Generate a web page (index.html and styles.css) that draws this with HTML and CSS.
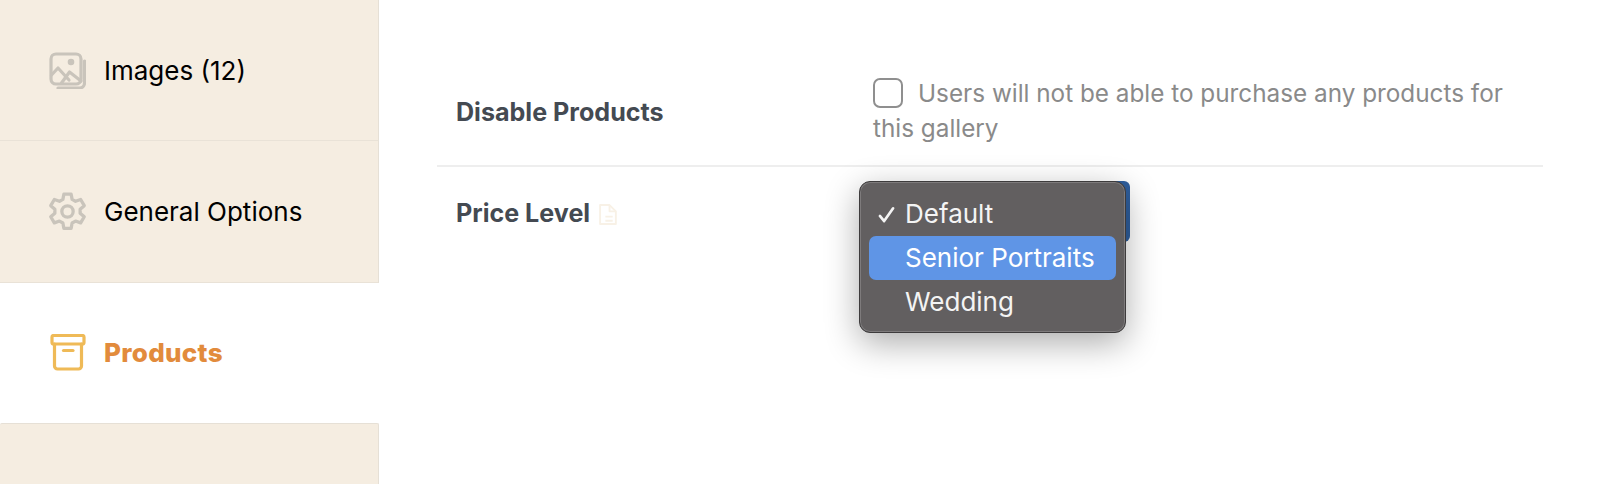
FILE: index.html
```html
<!DOCTYPE html>
<html lang="en">
<head>
<meta charset="utf-8">
<title>Products</title>
<link rel="stylesheet" href="styles.css">
</head>
<body>
<div class="page">
  <nav class="sidebar">
    <div class="tab tab-images">
      <svg class="icon icon-muted" viewBox="0 0 37 37" fill="none" stroke="currentColor" stroke-width="3.200" stroke-linecap="round" stroke-linejoin="round">
        <rect x="2" y="2" width="30" height="30" rx="5"/>
        <path d="M35.500 9v22a5 5 0 0 1-5 5H9"/>
        <path d="M2.500 23l6.500-7 11 12"/>
        <path d="M12.500 31l8-11 11.500 9"/>
        <circle cx="22" cy="10" r="1.700" fill="currentColor"/>
      </svg>
      <span>Images (12)</span>
    </div>
    <div class="tab tab-general">
      <svg class="icon icon-muted icon-gear" viewBox="1 1 36 36" fill="none" stroke="currentColor" stroke-width="3.200" stroke-linecap="round" stroke-linejoin="round">
        <path d="M15.500 2h7l1 5.200 3.300 1.900 5-1.800 3.500 6-4 3.500v3.800l4 3.500-3.500 6-5-1.800-3.300 1.900-1 5.300h-7l-1-5.300-3.300-1.900-5 1.800-3.500-6 4-3.500v-3.800l-4-3.500 3.500-6 5 1.800 3.300-1.900z"/>
        <circle cx="19" cy="19" r="5.500"/>
      </svg>
      <span>General Options</span>
    </div>
    <div class="tab tab-active">
      <svg class="icon icon-active" viewBox="0 0 37 37" fill="none" stroke="currentColor" stroke-width="3.200" stroke-linecap="round" stroke-linejoin="round">
        <rect x="3" y="1.500" width="32" height="8.500" rx="1.500"/>
        <path d="M5.500 10v22a3 3 0 0 0 3 3h21a3 3 0 0 0 3-3V10"/>
        <path d="M14.500 16.500h9.500"/>
      </svg>
      <span>Products</span>
    </div>
    <div class="tab tab-last"></div>
  </nav>
  <main class="content">
    <div class="row row-first">
      <div class="label label-first">Disable Products</div>
      <div class="value">
        <span class="checkbox"></span>Users will not be able to purchase any products for this gallery
      </div>
    </div>
    <div class="row row-second">
      <div class="label">Price Level
        <svg class="note" viewBox="0 0 20 20" fill="none" stroke="currentColor" stroke-width="1.800" stroke-linejoin="round">
          <path d="M2 1h9l6 6v12H2z"/>
          <path d="M11 1v6h6"/>
          <path d="M7 12h7M7 16h7"/>
        </svg>
      </div>
      <div class="value value-select">
        <div class="select-stub"></div>
        <div class="menu">
          <div class="option">
            <svg class="check" viewBox="0 0 18 18" fill="none" stroke="currentColor" stroke-width="2.800" stroke-linecap="round" stroke-linejoin="round"><path d="M2 10.500l4.500 5.500L16 2.500"/></svg>
            Default
          </div>
          <div class="option option-hover">Senior Portraits</div>
          <div class="option">Wedding</div>
        </div>
      </div>
    </div>
  </main>
</div>
</body>
</html>
```
FILE: styles.css
```css
* { box-sizing: border-box; }
html, body { margin: 0; height: 484px; overflow: hidden; background: #fff; }
body { font-family: Inter, "Liberation Sans", sans-serif; color: #000; }
.page { display: flex; height: 484px; }
.sidebar { width: 379px; flex: none; display: flex; flex-direction: column; }
.tab {
  flex: none;
  display: flex;
  align-items: center;
  gap: 18px;
  padding-left: 49px;
  background: #f5ede1;
  border-right: 1px solid #e6e0d6;
  border-bottom: 1px solid #e9e2d7;
  font-size: 26px;
}
.tab-images { height: 141px; }
.tab-general { height: 142px; }
.tab-active {
  height: 140px;
  padding-bottom: 2px;
  background: #fff;
  border: 0;
  color: #e28b3c;
  font-weight: 800;
  letter-spacing: .3px;
}
.tab-last {
  flex: 1;
  border-top: 1px solid #e6e0d6;
  border-radius: 2px 2px 0 0;
  border-bottom: 0;
}
.icon { width: 37px; height: 37px; flex: none; }
.icon-gear { overflow: visible; }
.icon-muted { color: #c9c4bb; }
.icon-active { color: #efba57; }
.content { width: 1106px; margin-left: 58px; flex: none; display: flex; flex-direction: column; }
.row { display: flex; align-items: center; padding-left: 19px; padding-right: 20px; }
.row-first { padding-top: 76px; padding-bottom: 19px; border-bottom: 2px solid #eeeeee; }
.row-second { padding-top: 28px; }
.label {
  width: 417px;
  flex: none;
  font-size: 25.100px;
  font-weight: 700;
  color: #444a52;
  line-height: 36px;
}
.label-first { margin-top: 2px; }
.value { flex: 1; font-size: 24.300px; line-height: 35px; color: #8a8a8a; }
.checkbox {
  display: inline-block;
  width: 30px;
  height: 30px;
  margin-right: 15px;
  border: 2px solid #8f8f8f;
  border-radius: 7px;
  vertical-align: -6px;
  background: #fff;
}
.note { width: 21px; height: 21px; color: #f8f1e6; margin-left: 2px; vertical-align: -3px; }
.value-select { position: relative; height: 36px; }
.select-stub {
  position: absolute;
  left: 195px;
  top: -14px;
  width: 62px;
  height: 61px;
  background: #2f5f9e;
  border-radius: 6px;
}
.menu {
  position: absolute;
  left: -14px;
  top: -14px;
  width: 267px;
  height: 152px;
  padding: 10px 9px;
  background: #625f60;
  border: 1px solid #3d3b3c;
  border-radius: 11px;
  box-shadow: inset 0 0 0 1px rgba(255, 255, 255, .18), 0 10px 34px rgba(0, 0, 0, .33);
  color: #f4f4f4;
  font-size: 26px;
}
.option {
  position: relative;
  height: 44px;
  line-height: 43px;
  padding-left: 36px;
  border-radius: 7px;
}
.option-hover { background: #5f95e6; color: #fff; }
.check { position: absolute; left: 9px; top: 14px; width: 17px; height: 17px; }
```
